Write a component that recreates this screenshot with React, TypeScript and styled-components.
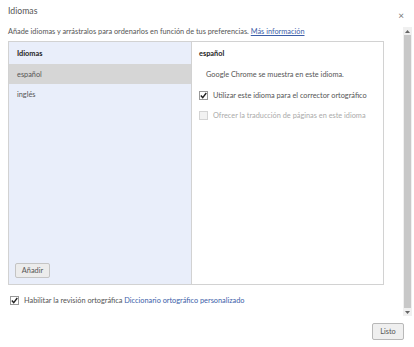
import React from "react";
import styled, { createGlobalStyle } from "styled-components";

const Global = createGlobalStyle`
  html, body { margin: 0; padding: 0; background: #fff; }
  body { font-family: Lato, "Noto Sans", sans-serif; color: #333; }
`;

const FS = "7.35px";

const Dialog = styled.div`
  width: 414px;
  height: 347px;
  display: flex;
  flex-direction: column;
  background: #fff;
  box-sizing: border-box;
`;

const Header = styled.div`
  height: 27px;
  display: flex;
  align-items: flex-start;
  justify-content: space-between;
  padding: 5px 8px 0 8px;
  box-sizing: border-box;
`;

const Title = styled.div`
  font-size: 8.7px;
  color: #555;
`;

const Close = styled.div`
  font-size: 10px;
  color: #777;
  padding-top: 4px;
  margin-right: 2px;
`;

const BodyRow = styled.div`
  flex: 1;
  display: flex;
  min-height: 0;
`;

const Content = styled.div`
  flex: 1;
  padding: 0 19px 0 8px;
  display: flex;
  flex-direction: column;
`;

const Desc = styled.div`
  font-size: ${FS};
  color: #555;
  height: 14px;
  line-height: 10px;
  padding-top: 0px;
  white-space: nowrap;
`;

const Link = styled.span<{ $u?: boolean }>`
  color: #3b5ea8;
  text-decoration: ${(p) => (p.$u ? "underline" : "none")};
`;

const Panel = styled.div`
  height: 244px;
  display: flex;
  border: 1px solid #d2d2d2;
  box-sizing: border-box;
`;

const LeftCol = styled.div`
  width: 182px;
  background: #e9eefa;
  border-right: 1px solid #d2d2d2;
  display: flex;
  flex-direction: column;
`;

const ColHead = styled.div<{ $flush?: boolean }>`
  height: 21px;
  display: flex;
  align-items: center;
  padding-left: ${(p) => (p.$flush ? "0" : "8px")};
  padding-top: 1px;
  font-size: ${FS};
  font-weight: 700;
  color: #222;
`;

const LangItem = styled.div<{ $sel?: boolean }>`
  height: 20px;
  display: flex;
  align-items: center;
  padding-left: 8px;
  font-size: ${FS};
  color: #555;
  background: ${(p) => (p.$sel ? "#d6d6d6" : "transparent")};
`;

const Spacer = styled.div`
  flex: 1;
`;

const AddBtn = styled.div`
  margin: 0 0 6px 6px;
  width: 35px;
  height: 15px;
  display: flex;
  align-items: center;
  justify-content: center;
  border: 1px solid #c4c4c4;
  border-radius: 2px;
  background: #ececec;
  font-size: ${FS};
  color: #555;
  box-sizing: border-box;
`;

const RightCol = styled.div`
  flex: 1;
  display: flex;
  flex-direction: column;
  padding-left: 7px;
`;

const Info = styled.div`
  padding-left: 7px;
  height: 21px;
  display: flex;
  align-items: center;
  font-size: ${FS};
  color: #555;
`;

const CheckRow = styled.div<{ $disabled?: boolean }>`
  height: 20px;
  display: flex;
  align-items: center;
  gap: 5px;
  font-size: ${FS};
  color: ${(p) => (p.$disabled ? "#aaa" : "#555")};
`;

const Box = styled.div<{ $disabled?: boolean }>`
  width: 7px;
  height: 7px;
  border: 1px solid ${(p) => (p.$disabled ? "#d4d4d4" : "#999")};
  background: ${(p) => (p.$disabled ? "#f2f2f2" : "#fff")};
  display: flex;
  align-items: center;
  justify-content: center;
`;

const BottomRow = styled.div`
  height: 30px;
  display: flex;
  align-items: center;
  gap: 5px;
  padding-left: 2px;
  font-size: ${FS};
  color: #555;
`;

const Scrollbar = styled.div`
  width: 9px;
  margin-right: 2px;
  display: flex;
  flex-direction: column;
  background: #f0f0f0;
`;

const Arrow = styled.div`
  height: 8px;
  display: flex;
  align-items: center;
  justify-content: center;
`;

const Thumb = styled.div`
  flex: 1;
  background: #c8c8c8;
  margin: 0 1px;
`;

const Footer = styled.div`
  height: 31px;
  display: flex;
  justify-content: flex-end;
  align-items: flex-start;
  padding: 7px 10px 0 0;
  box-sizing: border-box;
`;

const DoneBtn = styled.div`
  width: 32px;
  height: 17px;
  border: 1px solid #b8b8b8;
  border-radius: 2px;
  background: #efefef;
  display: flex;
  align-items: center;
  justify-content: center;
  font-size: ${FS};
  color: #555;
  box-sizing: border-box;
`;

const Check = () => (
  <svg width="7" height="7" viewBox="0 0 7 7">
    <path d="M0.8 3.6 L2.7 5.6 L6.3 1" fill="none" stroke="#222" strokeWidth="1.4" />
  </svg>
);

const Tri = ({ up }: { up?: boolean }) => (
  <svg width="5" height="3" viewBox="0 0 5 3">
    <path d={up ? "M0 3 L2.5 0 L5 3 Z" : "M0 0 L2.5 3 L5 0 Z"} fill="#666" />
  </svg>
);

export default function App() {
  return (
    <>
      <Global />
      <Dialog>
        <Header>
          <Title>Idiomas</Title>
          <Close>×</Close>
        </Header>
        <BodyRow>
          <Content>
            <Desc>
              Añade idiomas y arrástralos para ordenarlos en función de tus preferencias.{" "}
              <Link $u>Más información</Link>
            </Desc>
            <Panel>
              <LeftCol>
                <ColHead>Idiomas</ColHead>
                <LangItem $sel>español</LangItem>
                <LangItem>inglés</LangItem>
                <Spacer />
                <AddBtn>Añadir</AddBtn>
              </LeftCol>
              <RightCol>
                <ColHead $flush>español</ColHead>
                <Info>Google Chrome se muestra en este idioma.</Info>
                <CheckRow>
                  <Box>
                    <Check />
                  </Box>
                  Utilizar este idioma para el corrector ortográfico
                </CheckRow>
                <CheckRow $disabled>
                  <Box $disabled />
                  Ofrecer la traducción de páginas en este idioma
                </CheckRow>
              </RightCol>
            </Panel>
            <BottomRow>
              <Box>
                <Check />
              </Box>
              <span>
                Habilitar la revisión ortográfica <Link>Diccionario ortográfico personalizado</Link>
              </span>
            </BottomRow>
          </Content>
          <Scrollbar>
            <Arrow>
              <Tri up />
            </Arrow>
            <Thumb />
            <Arrow>
              <Tri />
            </Arrow>
          </Scrollbar>
        </BodyRow>
        <Footer>
          <DoneBtn>Listo</DoneBtn>
        </Footer>
      </Dialog>
    </>
  );
}
